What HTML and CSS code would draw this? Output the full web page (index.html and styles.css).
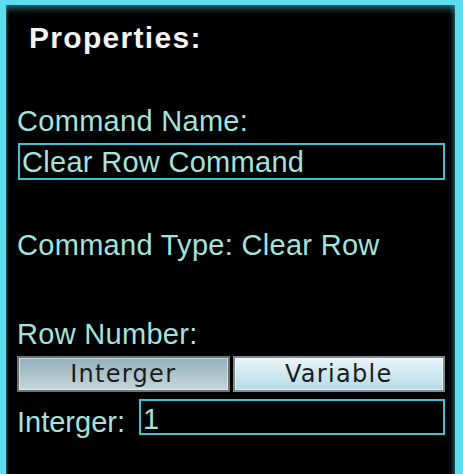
FILE: index.html
```html
<!DOCTYPE html>
<html>
<head>
<meta charset="utf-8">
<link rel="stylesheet" href="styles.css">
</head>
<body>
<div class="panel">
  <div class="title">Properties:</div>
  <div class="label name-label">Command Name:</div>
  <div class="field">Clear Row Command</div>
  <div class="label type-label">Command Type: Clear Row</div>
  <div class="label row-label">Row Number:</div>
  <div class="toggle">
    <div class="btn btn-active">Interger</div>
    <div class="btn">Variable</div>
  </div>
  <div class="int-row">
    <div class="label int-label">Interger:</div>
    <div class="field int-field">1</div>
  </div>
</div>
</body>
</html>
```
FILE: styles.css
```css
html, body {
  margin: 0;
  padding: 0;
  background: #000;
}
body {
  width: 463px;
  height: 474px;
  overflow: hidden;
}
.panel {
  box-sizing: border-box;
  width: 463px;
  height: 490px;
  border-left: 6px solid #5cdcee;
  border-top: 5px solid #5cdcee;
  border-right: 8px solid #5cdcee;
  padding: 17px 10px 0 11px;
  background: #000;
  box-shadow: inset 0 7px 6px -3px rgba(70, 170, 180, 0.55), inset -4px 0 5px -2px rgba(70, 170, 180, 0.5), inset 3px 0 3px -2px rgba(70, 170, 180, 0.6);
  font-family: "Liberation Sans", Arial, sans-serif;
}
.title {
  font-size: 30px;
  line-height: 32px;
  font-weight: bold;
  color: #f2f2f2;
  letter-spacing: 1.3px;
  margin-left: 12px;
}
.label {
  font-size: 29px;
  line-height: 32px;
  color: #a6e2da;
  letter-spacing: 0.3px;
}
.name-label {
  margin-top: 51px;
}
.field {
  box-sizing: border-box;
  height: 37px;
  margin-top: 6px;
  margin-left: 1px;
  border: 2px solid #3cc4d4;
  padding: 0 2px;
  font-size: 29px;
  line-height: 35px;
  color: #a6e2da;
  letter-spacing: 0.3px;
}
.type-label {
  margin-top: 49px;
}
.row-label {
  margin-top: 57px;
}
.toggle {
  display: flex;
  gap: 3px;
  margin-top: 6px;
  height: 36px;
}
.btn {
  flex: 1;
  box-sizing: border-box;
  border: 2px solid #7c8a8e;
  background: linear-gradient(#eaf5f8, #b4dae8);
  color: #1c1c1c;
  font-family: "DejaVu Sans", Verdana, sans-serif;
  font-size: 24px;
  letter-spacing: 1.3px;
  line-height: 32px;
  text-align: center;
  box-shadow: inset 0 0 0 1px rgba(255, 255, 255, 0.5);
}
.btn-active {
  background: linear-gradient(#93b0ba, #c6d6da);
  border-color: #6c7478;
}
.int-row {
  display: flex;
  align-items: flex-end;
  margin-top: 7px;
}
.int-label {
  margin-bottom: -3px;
  flex: 0 0 122px;
  white-space: nowrap;
  letter-spacing: 0;
}
.int-field {
  flex: 1;
  height: 36px;
  margin: 0;
  line-height: 36px;
}
```
